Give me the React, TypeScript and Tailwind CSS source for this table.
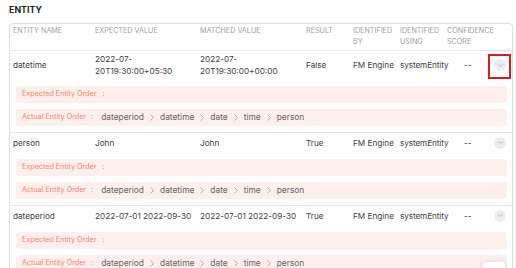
import React from "react";

type Row = {
  name: string;
  expected: string[];
  matched: string[];
  result: string;
  by: string;
  using: string;
  score: string;
  highlight?: boolean;
};

const rows: Row[] = [
  {
    name: "datetime",
    expected: ["2022-07-", "20T19:30:00+05:30"],
    matched: ["2022-07-", "20T19:30:00+00:00"],
    result: "False",
    by: "FM Engine",
    using: "systemEntity",
    score: "--",
    highlight: true,
  },
  {
    name: "person",
    expected: ["John"],
    matched: ["John"],
    result: "True",
    by: "FM Engine",
    using: "systemEntity",
    score: "--",
  },
  {
    name: "dateperiod",
    expected: ["2022-07-01 2022-09-30"],
    matched: ["2022-07-01 2022-09-30"],
    result: "True",
    by: "FM Engine",
    using: "systemEntity",
    score: "--",
  },
];

const order = ["dateperiod", "datetime", "date", "time", "person"];

const cols = "grid grid-cols-[82px_105px_106px_47px_47px_47px_1fr_24px]";

function Sep() {
  return (
    <svg width="4" height="7" viewBox="0 0 4 7" className="shrink-0">
      <path d="M0.5 0.5 L3.5 3.5 L0.5 6.5" fill="none" stroke="#a0a0a0" strokeWidth="0.9" />
    </svg>
  );
}

function Chevron() {
  return (
    <div className="w-[12px] h-[12px] rounded-full bg-[#ececec] flex items-center justify-center">
      <svg width="5" height="3" viewBox="0 0 5 3">
        <path d="M0.4 0.4 L2.5 2.5 L4.6 0.4" fill="none" stroke="#a8a8a8" strokeWidth="0.8" />
      </svg>
    </div>
  );
}

function Cell({ children, className = "pl-[3px]" }: { children: React.ReactNode; className?: string }) {
  return <div className={`${className} leading-[12px] whitespace-nowrap`}>{children}</div>;
}

export default function App() {
  return (
    <div className="relative w-[516px] h-[268px] overflow-hidden bg-white font-['Inter','Noto_Sans',sans-serif]">
      <div className="pl-[9px] pt-[4px]">
        <div className="h-[12px] leading-[12px] text-[8.7px] font-bold text-[#222] tracking-[0.1px]">ENTITY</div>
        <div className="mt-[7px] w-[504px] border border-[#dedede] rounded-[4px]">
          <div className={`${cols} pt-[2px] pb-[3px] text-[7.2px] leading-[10.5px] text-[#a0a0a0]`}>
            <div className="pl-[3px]">ENTITY NAME</div>
            <div className="pl-[3px]">EXPECTED VALUE</div>
            <div className="pl-[3px]">MATCHED VALUE</div>
            <div className="pl-[3px]">RESULT</div>
            <div className="pl-[3px]">IDENTIFIED<br />BY</div>
            <div className="pl-[3px]">IDENTIFIED<br />USING</div>
            <div className="pl-[3px]">CONFIDENCE<br />SCORE</div>
            <div />
          </div>
          {rows.map((r) => (
            <div key={r.name} className="border-t border-[#e8e8e8]">
              <div className={`${cols} items-center pt-[2px] min-h-[17px] text-[8.2px] text-[#404040]`}>
                <Cell>{r.name}</Cell>
                <Cell>
                  {r.expected.map((l) => (
                    <div key={l}>{l}</div>
                  ))}
                </Cell>
                <Cell>
                  {r.matched.map((l) => (
                    <div key={l}>{l}</div>
                  ))}
                </Cell>
                <Cell>{r.result}</Cell>
                <Cell>{r.by}</Cell>
                <Cell className="pl-[3px] tracking-[-0.1px]">{r.using}</Cell>
                <Cell className="pl-[20px]">{r.score}</Cell>
                <div className="relative self-stretch flex items-center justify-center min-h-[14px]">
                  <Chevron />
                  {r.highlight && (
                    <div className="absolute left-0 right-[1px] top-[1px] -bottom-[2px] border-2 border-[#e0191d]" />
                  )}
                </div>
              </div>
              <div className="mt-[9px] ml-[6px] mr-[5px] pb-[6px] flex flex-col gap-[6px]">
                <div className="h-[17px] rounded-[3px] bg-[#fdefec] flex items-center pl-[6px] text-[7.2px] text-[#f2846c]">
                  <span>Expected Entity Order</span>
                  <span className="ml-[6px]">:</span>
                </div>
                <div className="h-[17px] rounded-[3px] bg-[#fdefec] flex items-center pl-[6px]">
                  <span className="text-[7.2px] text-[#f2846c]">Actual Entity Order</span>
                  <span className="ml-[5px] mr-[8px] text-[7.2px] text-[#f2846c]">:</span>
                  <div className="flex items-center gap-[6px] text-[8.4px] text-[#666]">
                    {order.map((o, i) => (
                      <React.Fragment key={o}>
                        {i > 0 && <Sep />}
                        <span>{o}</span>
                      </React.Fragment>
                    ))}
                  </div>
                </div>
              </div>
            </div>
          ))}
        </div>
      </div>
      <div className="absolute left-[483px] top-[262px] w-[22px] h-[22px] rounded-[3px] bg-white shadow-[0_0_6px_rgba(0,0,0,0.12)]" />
    </div>
  );
}
